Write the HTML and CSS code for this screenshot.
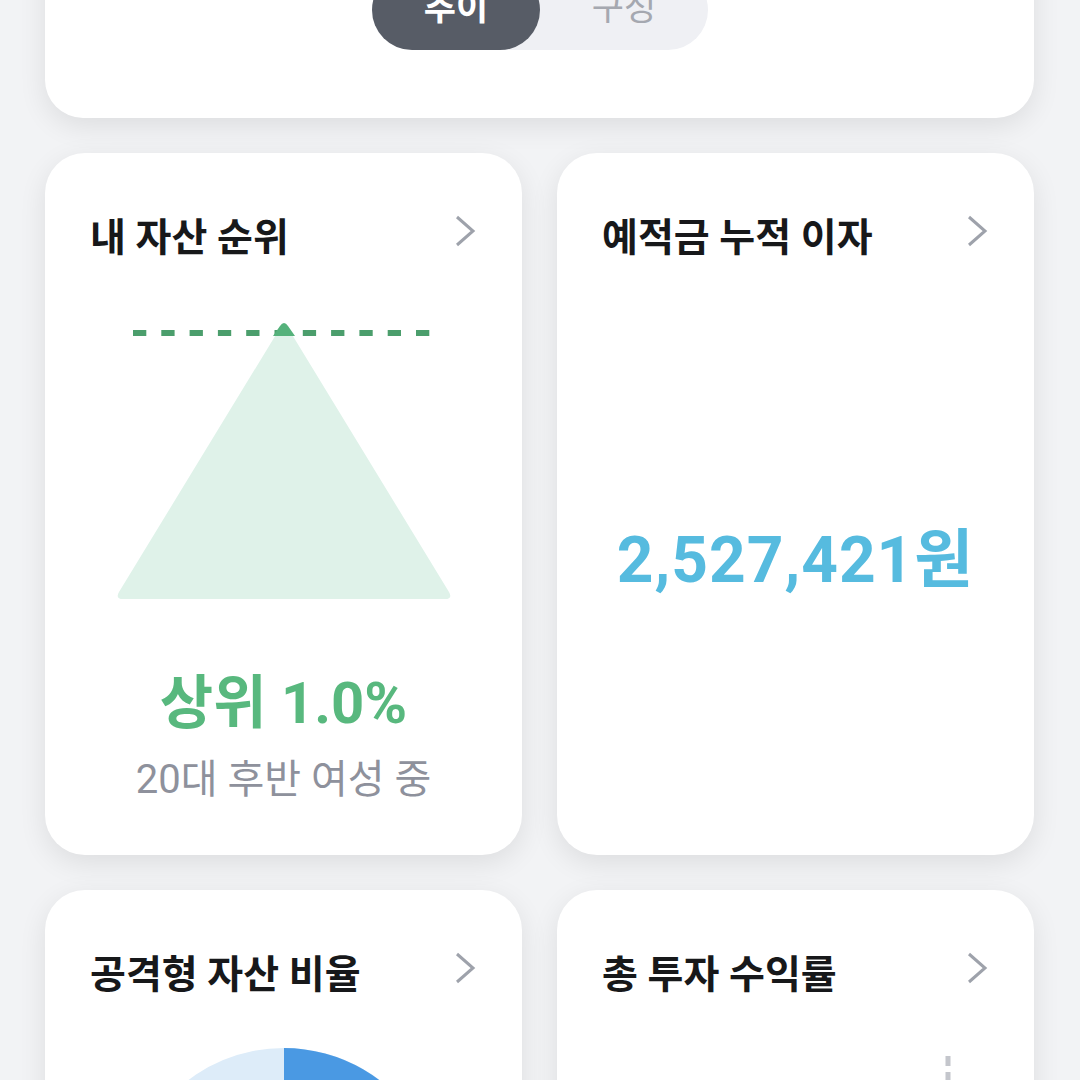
FILE: index.html
```html
<!DOCTYPE html>
<html lang="ko">
<head>
    <meta charset="UTF-8">
    <meta name="viewport" content="width=device-width, initial-scale=1.0">
    <title>자산 리포트</title>
    <link rel="stylesheet" href="styles.css">
</head>
<body>

<div class="page">
    <div class="top-card">
        <div class="toggle">
            <span class="toggle-item active">추이</span>
            <span class="toggle-item">구성</span>
        </div>
    </div>

    <div class="grid">
        <div class="card">
            <div class="card-head">
                <h2>내 자산 순위</h2>
                <svg class="chevron" width="22" height="32" viewBox="0 0 22 32"><path d="M3 2 L19 16 L3 30" /></svg>
            </div>
            <svg class="rank-chart" width="387" height="310" viewBox="0 0 387 310">
                <path d="M190 28 Q194 21 198 28 L359 292 Q363 299 355 299 L33 299 Q25 299 29 292 Z" fill="#dff2e9" />
                <line x1="43" y1="33" x2="345" y2="33" stroke="#4b9e6c" stroke-width="6" stroke-dasharray="13.3 15" />
                <path d="M183 36 L190 26 Q194 20 198 26 L205 36 Z" fill="#55b27b" />
            </svg>
            <p class="rank-value">상위 1.0%</p>
            <p class="rank-sub">20대 후반 여성 중</p>
        </div>

        <div class="card">
            <div class="card-head">
                <h2>예적금 누적 이자</h2>
                <svg class="chevron" width="22" height="32" viewBox="0 0 22 32"><path d="M3 2 L19 16 L3 30" /></svg>
            </div>
            <div class="card-body">
                <p class="amount">2,527,421원</p>
            </div>
        </div>

        <div class="card">
            <div class="card-head">
                <h2>공격형 자산 비율</h2>
                <svg class="chevron" width="22" height="32" viewBox="0 0 22 32"><path d="M3 2 L19 16 L3 30" /></svg>
            </div>
            <svg class="pie" width="387" height="340" viewBox="0 0 387 340">
                <circle cx="194" cy="186" r="159" fill="#ddecf9" />
                <path d="M194 186 L194 27 A159 159 0 0 1 331 266 Z" fill="#4a99e3" />
            </svg>
        </div>

        <div class="card">
            <div class="card-head">
                <h2>총 투자 수익률</h2>
                <svg class="chevron" width="22" height="32" viewBox="0 0 22 32"><path d="M3 2 L19 16 L3 30" /></svg>
            </div>
            <svg class="profit" width="387" height="340" viewBox="0 0 387 340">
                <line x1="346" y1="35" x2="346" y2="340" stroke="#c4c6cc" stroke-width="5" stroke-dasharray="10 6" />
            </svg>
        </div>
    </div>
</div>

</body>
</html>
```

FILE: styles.css
```css
body {
    margin: 0;
    background: #f2f3f5;
    font-family: Roboto, "Noto Sans CJK KR", sans-serif;
    overflow: hidden;
}

.page {
    padding: 0 46px 0 45px;
}

.top-card {
    background: #fff;
    border-radius: 0 0 38px 38px;
    margin-top: -100px;
    padding: 70px 0 68px;
    display: flex;
    justify-content: center;
    box-shadow: 0 8px 28px rgba(0, 0, 0, 0.09);
}

.toggle {
    display: flex;
    width: 336px;
    height: 80px;
    border-radius: 40px;
    background: #eff0f4;
    margin-left: 1px;
}

.toggle-item {
    flex: 1;
    display: flex;
    align-items: center;
    justify-content: center;
    padding-bottom: 12px;
    font-size: 35px;
    color: #a5a8b0;
    border-radius: 40px;
}

.toggle-item.active {
    background: #575c66;
    color: #fff;
    font-weight: 700;
}

.grid {
    display: grid;
    grid-template-columns: 1fr 1fr;
    gap: 35px;
    margin-top: 35px;
}

.card {
    background: #fff;
    border-radius: 40px;
    height: 702px;
    padding: 56px 45px 0;
    box-sizing: border-box;
    display: flex;
    flex-direction: column;
    box-shadow: 0 8px 28px rgba(0, 0, 0, 0.09);
}

.card-head {
    display: flex;
    justify-content: space-between;
    align-items: center;
    height: 50px;
}

.card-head h2 {
    margin: 0;
    font-size: 39px;
    font-weight: 700;
    color: #17181a;
}

.chevron {
    margin: -6px 1px 0 0;
}

.chevron path {
    fill: none;
    stroke: #9ea2ab;
    stroke-width: 3;
}

.rank-chart {
    display: block;
    margin-top: 41px;
}

.rank-value {
    margin: 60px 0 0;
    text-align: center;
    font-size: 58px;
    line-height: 66px;
    font-weight: 700;
    color: #58b87e;
}

.rank-sub {
    margin: 20px 0 0;
    text-align: center;
    font-size: 40px;
    line-height: 48px;
    color: #8e919c;
}

.card-body {
    flex: 1;
    display: flex;
    align-items: center;
    justify-content: center;
    padding-bottom: 6px;
}

.amount {
    margin: 0;
    font-size: 64px;
    font-weight: 700;
    color: #56bbdf;
    letter-spacing: 1px;
}

.pie,
.profit {
    display: block;
    margin-top: 25px;
}
```
